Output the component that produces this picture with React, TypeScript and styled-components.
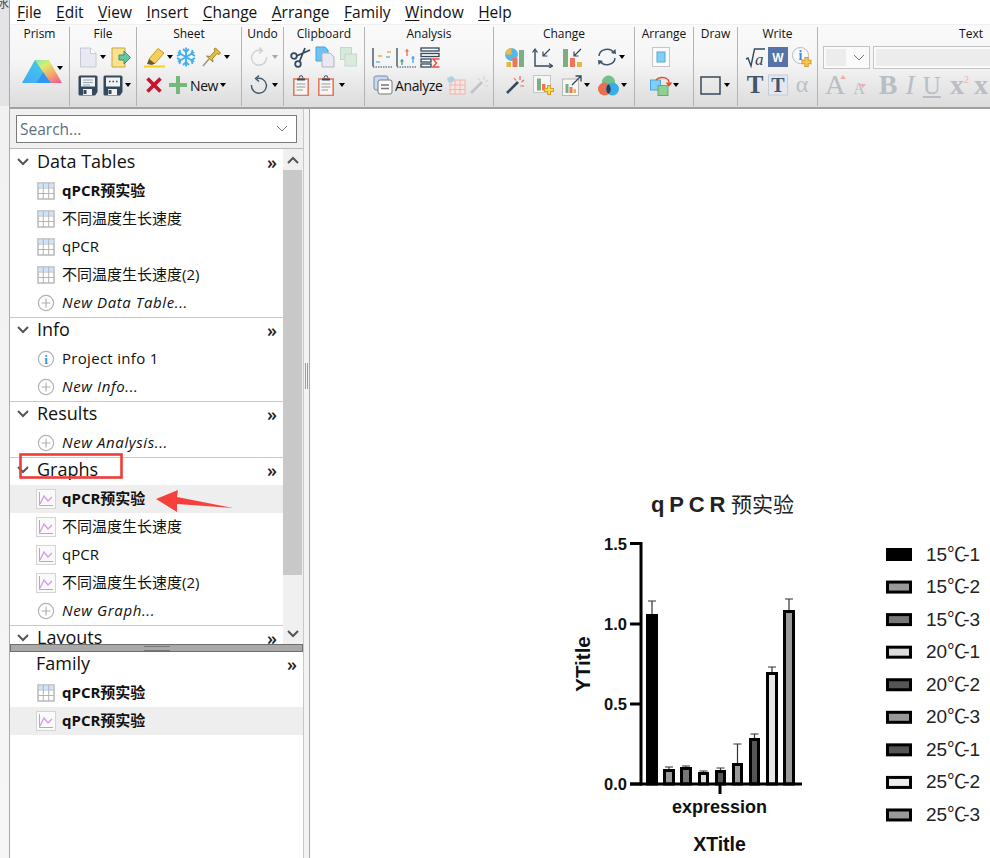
import React from "react";
import styled, { createGlobalStyle } from "styled-components";

const GlobalStyle = createGlobalStyle`
  html, body {
    margin: 0;
    padding: 0;
    background: #ffffff;
  }
  body {
    font-family: "Open Sans", "Noto Sans CJK SC", sans-serif;
    color: #000000;
  }
`;

const Page = styled.div`
  position: relative;
  width: 990px;
  height: 858px;
  overflow: hidden;
  display: flex;
  background: #ffffff;
`;

const LeftStrip = styled.div`
  width: 9px;
  flex: none;
  border-right: 1px solid #a9a9a9;
  background: linear-gradient(to bottom, #e4e4e6 0, #e4e4e6 106px, #f1f1f1 106px, #f6f6f6 100%);
  overflow: hidden;
`;

const StripText = styled.div`
  font-size: 11px;
  line-height: 8px;
  color: #444;
  white-space: nowrap;
  margin-left: -2px;
`;

const Main = styled.div`
  flex: 1;
  min-width: 0;
  display: flex;
  flex-direction: column;
`;

const MenuBar = styled.div`
  height: 24px;
  flex: none;
  display: flex;
  align-items: center;
  gap: 14.5px;
  padding-left: 7px;
  background: #ffffff;
  font-size: 15.5px;
  color: #111;
`;

const MenuItem = styled.span`
  u {
    text-underline-offset: 2px;
  }
`;

const Ribbon = styled.div`
  height: 85px;
  flex: none;
  display: flex;
  box-sizing: border-box;
  border-top: 1px solid #f0f0f0;
  border-bottom: 2px solid #a0a0a0;
  background: linear-gradient(to bottom, #fafafa 0%, #f5f5f5 45%, #dcdcdc 100%);
  overflow: hidden;
`;

const Group = styled.div<{ $w: number; $last?: boolean }>`
  width: ${(p) => p.$w}px;
  flex: none;
  box-sizing: border-box;
  display: flex;
  flex-direction: column;
  margin: 2px 0 1px;
  border-right: ${(p) => (p.$last ? "none" : "1px solid #b4b4b4")};
`;

const GroupTitle = styled.div<{ $right?: boolean }>`
  height: 16px;
  line-height: 14px;
  font-size: 12px;
  text-align: ${(p) => (p.$right ? "right" : "center")};
  padding-right: ${(p) => (p.$right ? "8px" : "0")};
  color: #111;
`;

const ToolRow = styled.div<{ $base?: boolean }>`
  height: 28px;
  display: flex;
  align-items: ${(p) => (p.$base ? "baseline" : "center")};
  flex: none;
`;

const TallRow = styled.div`
  height: 56px;
  display: flex;
  align-items: center;
  flex: none;
`;

const Slot = styled.span<{ $w: number; $ml: number; $h?: number }>`
  width: ${(p) => p.$w}px;
  height: ${(p) => p.$h ?? 22}px;
  margin-left: ${(p) => p.$ml}px;
  flex: none;
  display: inline-flex;
  align-items: center;
  justify-content: center;
  svg {
    display: block;
  }
`;

const LogoSlot = styled(Slot)`
  position: relative;
`;

const Caret = styled.span<{ $ml?: number; $muted?: boolean }>`
  flex: none;
  width: 0;
  height: 0;
  margin-left: ${(p) => p.$ml ?? 3}px;
  border-left: 3.5px solid transparent;
  border-right: 3.5px solid transparent;
  border-top: 4px solid ${(p) => (p.$muted ? "#a8a8a8" : "#000")};
`;

const LogoCaret = styled(Caret)`
  position: absolute;
  right: -1px;
  top: 7px;
  margin: 0;
`;

const ToolLabel = styled.span<{ $ml: number }>`
  font-size: 14px;
  letter-spacing: -0.4px;
  margin-left: ${(p) => p.$ml}px;
  color: #111;
`;

const FontSelect = styled.div`
  width: 47px;
  height: 23px;
  margin-left: 5px;
  box-sizing: border-box;
  flex: none;
  border: 1px solid #c4c4c4;
  background: #fafafa;
  display: flex;
  align-items: center;
  padding: 2px;
  gap: 7px;
`;

const FontSwatch = styled.span`
  width: 20px;
  height: 17px;
  background: #ececec;
`;

const FontInput = styled.div`
  width: 130px;
  height: 23px;
  margin-left: 3px;
  box-sizing: border-box;
  flex: none;
  border: 1px solid #c4c4c4;
  padding: 2px;
  background: #fafafa;
  &::after {
    content: "";
    display: block;
    height: 17px;
    background: #ececec;
  }
`;

const DimGlyph = styled.span<{ $size: number; $ml: number; $bold?: boolean; $italic?: boolean; $under?: boolean }>`
  font-family: "Liberation Serif", serif;
  font-size: ${(p) => p.$size}px;
  font-weight: ${(p) => (p.$bold ? 700 : 400)};
  font-style: ${(p) => (p.$italic ? "italic" : "normal")};
  text-decoration: ${(p) => (p.$under ? "underline" : "none")};
  margin-left: ${(p) => p.$ml}px;
  color: #b9bec4;
  line-height: 28px;
  flex: none;
  position: relative;
`;

const SuperTwo = styled.span`
  font-size: 10px;
  font-weight: 400;
  color: #f0b0aa;
  vertical-align: 11px;
  line-height: 0;
`;

const SizeMark = styled.span<{ $down?: boolean }>`
  position: absolute;
  left: 100%;
  top: ${(p) => (p.$down ? "9px" : "4px")};
  margin-left: -5px;
  width: 0;
  height: 0;
  border-left: 3px solid transparent;
  border-right: 3px solid transparent;
  border-top: ${(p) => (p.$down ? "4px solid #f0b0aa" : "none")};
  border-bottom: ${(p) => (p.$down ? "none" : "4px solid #f0b0aa")};
`;

const Body = styled.div`
  flex: 1;
  min-height: 0;
  display: flex;
`;

const Sidebar = styled.div`
  width: 293px;
  flex: none;
  display: flex;
  flex-direction: column;
`;

const SearchWrap = styled.div`
  height: 40px;
  flex: none;
  box-sizing: border-box;
  padding: 6px 6px 0;
  background: #f0f0f0;
  border-bottom: 1px solid #b8b8b8;
`;

const SearchBox = styled.div`
  height: 28px;
  box-sizing: border-box;
  border: 1px solid #7a7a7a;
  background: #ffffff;
  display: flex;
  align-items: center;
  justify-content: space-between;
  padding: 0 8px 1px 3px;
  font-size: 15.5px;
  color: #5f6f80;
`;

const ListPane = styled.div`
  height: 495px;
  flex: none;
  display: flex;
  overflow: hidden;
  background: #f0f0f0;
`;

const List = styled.div`
  width: 273px;
  flex: none;
  padding-top: 1px;
  background: #ffffff;
`;

const ScrollBar = styled.div`
  width: 19px;
  flex: none;
  background: #f0f0f0;
  display: flex;
  flex-direction: column;
  align-items: stretch;
`;

const ScrollButton = styled.div<{ $h: number }>`
  height: ${(p) => p.$h}px;
  display: flex;
  align-items: center;
  justify-content: center;
  flex: none;
`;

const ScrollThumb = styled.div`
  height: 405px;
  background: #c8c8c8;
  flex: none;
`;

const ScrollTrack = styled.div`
  flex: 1;
`;

const Section = styled.div`
  border-bottom: 1px solid #c8c8c8;
`;

const SectionHeader = styled.div`
  height: 27px;
  box-sizing: border-box;
  display: flex;
  align-items: center;
  padding: 0 6px 3px 6px;
  font-size: 18px;
  color: #111;
  line-height: 24px;
`;

const HeaderLabel = styled.span`
  flex: 1;
  margin-left: 7px;
  margin-top: -2px;
  white-space: nowrap;
`;

const FamilyLabel = styled(HeaderLabel)`
  margin-left: 20px;
`;

const More = styled.span`
  font-size: 18px;
  line-height: 18px;
  font-weight: 600;
  color: #222;
`;

const Row = styled.div<{ $active?: boolean }>`
  height: 28px;
  display: flex;
  align-items: center;
  padding-left: 26px;
  background: ${(p) => (p.$active ? "#eeeeee" : "transparent")};
`;

const RowIcon = styled.span`
  width: 20px;
  flex: none;
  display: flex;
  justify-content: center;
`;

const RowLabel = styled.span<{ $bold?: boolean; $italic?: boolean; $track?: number }>`
  margin-left: 6px;
  padding-bottom: 3px;
  font-size: 15px;
  font-weight: ${(p) => (p.$bold ? 700 : 400)};
  font-style: ${(p) => (p.$italic ? "italic" : "normal")};
  letter-spacing: ${(p) => p.$track ?? 0}px;
  color: #111;
  white-space: nowrap;
`;

const SplitBar = styled.div`
  height: 8px;
  flex: none;
  box-sizing: border-box;
  background: #a9a9a9;
  border: 1px solid #6e6e6e;
  display: flex;
  align-items: center;
  justify-content: center;
  &::after {
    content: "";
    width: 26px;
    height: 3px;
    border-top: 1px solid #777;
    border-bottom: 1px solid #777;
  }
`;

const FamilyPane = styled.div`
  flex: 1;
  background: #ffffff;
`;

const Divider = styled.div`
  width: 7px;
  flex: none;
  box-sizing: border-box;
  background: #f4f4f4;
  border-left: 1px solid #c8c8c8;
  border-right: 1px solid #a9a9a9;
  display: flex;
  align-items: flex-start;
  justify-content: center;
  padding-top: 254px;
  &::after {
    content: "";
    width: 1px;
    height: 26px;
    border-left: 1px solid #9a9a9a;
    border-right: 1px solid #9a9a9a;
  }
`;

const Canvas = styled.div`
  flex: 1;
  background: #ffffff;
  padding: 371px 0 0 260px;
  box-sizing: border-box;
  overflow: hidden;
`;

const ChartSvg = styled.svg`
  display: block;
  width: 420px;
  height: 378px;
  font-family: "Liberation Sans", sans-serif;
`;

const Annotation = styled.svg`
  position: absolute;
  left: 0;
  top: 0;
  width: 990px;
  height: 858px;
  pointer-events: none;
`;

const Ico: React.FC<{ w?: number; h?: number; children: React.ReactNode }> = ({ w = 22, h = 22, children }) => (
  <svg width={w} height={h} viewBox={`0 0 ${w} ${h}`}>
    {children}
  </svg>
);

const SLATE = "#34495e";

const PrismLogo = () => (
  <svg width="40" height="24" viewBox="0 0 40 24">
    <defs>
      <linearGradient id="pl1" x1="0" y1="1" x2="0.7" y2="0">
        <stop offset="0" stopColor="#3fa9f5" />
        <stop offset="1" stopColor="#46c6ee" />
      </linearGradient>
      <linearGradient id="pl2" x1="0" y1="0" x2="1" y2="1">
        <stop offset="0" stopColor="#4ee6d0" />
        <stop offset="0.4" stopColor="#d8ee6e" />
        <stop offset="0.7" stopColor="#f9a26a" />
        <stop offset="1" stopColor="#f04f9a" />
      </linearGradient>
    </defs>
    <polygon points="0,24 13,1 27,1 40,24" fill="url(#pl2)" />
    <polygon points="0,24 13,1 21,13 14,24" fill="url(#pl1)" />
    <polygon points="14,24 21,13 29,24" fill="#2f95f7" />
  </svg>
);

const BlankDoc = () => (
  <Ico w={18} h={21}>
    <path d="M1.5 1 H11.5 L17 6.5 V20 H1.5Z" fill="#e8e9f2" stroke="#c6c8d4" />
    <path d="M11.5 1 V6.5 H17" fill="#fff" stroke="#c6c8d4" />
  </Ico>
);

const ImportDoc = () => (
  <Ico w={20} h={21}>
    <path d="M1 1 H14 V20 H1Z" fill="#fbe38e" stroke="#c9a441" />
    <path d="M8 8 H13 V4 L19.5 10.5 L13 17 V13 H8Z" fill="#67c79d" stroke="#3f8f75" />
  </Ico>
);

const SaveDisk = ({ dots }: { dots?: boolean }) => (
  <Ico w={20} h={21}>
    <path d="M0.5 2 Q0.5 0.5 2 0.5 H18 Q19.5 0.5 19.5 2 V17 L17 20.5 H2 Q0.5 20.5 0.5 19Z" fill={SLATE} />
    <rect x="3" y="2.5" width="14" height="9" fill="#f3f3f3" />
    {dots ? (
      <path d="M6 6.5 h1.5 M9.5 6.5 h1.5 M13 6.5 h1.5" stroke={SLATE} strokeWidth="1.6" />
    ) : (
      <path d="M5 5 H15 M5 7.5 H15 M5 10 H12" stroke="#9aa5b1" />
    )}
    <rect x="5" y="14" width="9" height="6" fill="#f3f3f3" />
    <rect x="5.5" y="15" width="3" height="4" fill={SLATE} />
  </Ico>
);

const Highlighter = () => (
  <Ico w={22} h={22}>
    <path d="M5 13 L14 2.5 L20 7 L11 17.5 L6 17Z" fill="#f5cf5a" stroke="#c9972b" />
    <path d="M5 13 L11 17.5 L8 19 L3 18Z" fill="#6b5a2a" />
    <rect x="0" y="19.5" width="21" height="2" fill="#f6d21f" />
  </Ico>
);

const Snowflake = () => (
  <Ico w={20} h={20}>
    <g stroke="#3fb1ee" strokeWidth="1.8" fill="none">
      <path d="M10 0.5 V19.5 M1.8 5.2 L18.2 14.8 M18.2 5.2 L1.8 14.8" />
      <path d="M7 2 L10 5 L13 2 M7 18 L10 15 L13 18 M1 9 L4.5 7 L3.5 3 M19 9 L15.5 7 L16.5 3 M1 11 L4.5 13 L3.5 17 M19 11 L15.5 13 L16.5 17" />
    </g>
  </Ico>
);

const Pin = () => (
  <Ico w={19} h={20}>
    <path d="M1 19 L7 12" stroke="#a39a7c" strokeWidth="1.6" />
    <path d="M4.5 9 L8 9.5 L13 4 L12 2 L13.5 1 L18.5 6 L17 7.5 L15 6.5 L10.5 11.5 L11 15Z" fill="#e7bd3a" stroke="#a3801f" />
  </Ico>
);

const RedX = () => (
  <Ico w={18} h={18}>
    <path d="M2.5 2.5 L15.5 15.5 M15.5 2.5 L2.5 15.5" stroke="#c8142e" strokeWidth="3.6" />
  </Ico>
);

const GreenPlus = () => (
  <Ico w={20} h={20}>
    <path d="M10 1 V19 M1 10 H19" stroke="#74b87a" strokeWidth="4" />
  </Ico>
);

const Circular = ({ muted, flip }: { muted?: boolean; flip?: boolean }) => (
  <Ico w={18} h={20}>
    <g transform={flip ? "translate(18 0) scale(-1 1)" : undefined} fill="none" stroke={muted ? "#cbd0d5" : "#3f566b"} strokeWidth="1.4">
      <path d="M11 3.5 A7.5 7.5 0 1 0 16.5 10" />
      <path d="M9 0.5 L12.5 3.5 L9 6.5" />
    </g>
  </Ico>
);

const Scissors = () => (
  <Ico w={21} h={22}>
    <g fill="none" stroke={SLATE} strokeWidth="1.8">
      <circle cx="4" cy="10" r="2.8" />
      <circle cx="8" cy="18" r="2.8" />
      <path d="M6.5 10 L20 4 M9.5 15.5 L15 2" />
    </g>
  </Ico>
);

const CopyDocs = () => (
  <Ico w={21} h={22}>
    <path d="M1 1 H10 L13 4 V15 H1Z" fill="#6cc3f3" stroke="#4aa3de" />
    <path d="M7 7 H15 L19 11 V21 H7Z" fill="#e8e9f2" stroke="#aeb2c0" />
  </Ico>
);

const PasteDim = () => (
  <Ico w={17} h={20}>
    <rect x="0.5" y="0.5" width="11" height="12" fill="#d9e8dc" stroke="#c4d8c8" />
    <rect x="5" y="7" width="11.5" height="12" fill="#d8ebdc" stroke="#c4d8c8" />
  </Ico>
);

const Clipboard = () => (
  <Ico w={16} h={21}>
    <circle cx="8" cy="2.5" r="1.8" fill="none" stroke={SLATE} />
    <rect x="0.8" y="4" width="14.4" height="16.5" fill="#f6f6f6" stroke="#e5775a" strokeWidth="1.6" />
    <rect x="4" y="3.5" width="8" height="2" fill={SLATE} />
    <path d="M3.5 9 H12.5 M3.5 12 H12.5 M3.5 15 H10" stroke="#999" />
  </Ico>
);

const SolidDash = ({ color, y, x = 5 }: { color: string; y: number; x?: number }) => (
  <path d={`M${x} ${y} h4`} stroke={color} strokeWidth="1.4" />
);

const ColumnStats = () => (
  <Ico w={21} h={21}>
    <path d="M1 1 V19.5" stroke={SLATE} strokeWidth="1.3" />
    <path d="M1 20 H21" stroke={SLATE} strokeDasharray="1.5 1" />
    <SolidDash color="#f0a63a" y={5} x={15} />
    <SolidDash color="#f0a63a" y={9} x={6} />
    <SolidDash color="#5fb9e0" y={10} x={14} />
    <SolidDash color="#5fb9e0" y={15} x={4} />
  </Ico>
);

const TTest = () => (
  <Ico w={21} h={21}>
    <path d="M1 1 V19.5" stroke={SLATE} strokeWidth="1.3" />
    <path d="M1 20 H21" stroke={SLATE} strokeDasharray="1.5 1" />
    <path d="M6 12 v6 M4.5 14 h3" stroke="#3f9e85" strokeWidth="1.3" />
    <path d="M11 2 v7 M9.5 4 h3" stroke="#ef6a4d" strokeWidth="1.3" />
    <path d="M17 9 v7 M15.5 11 h3" stroke="#4aa3de" strokeWidth="1.3" />
  </Ico>
);

const Sigma = () => (
  <Ico w={20} h={21}>
    <g fill="#fff" stroke={SLATE} strokeWidth="1.3">
      <rect x="1" y="1" width="18" height="3" />
      <rect x="1" y="6.5" width="18" height="3" />
      <rect x="1" y="12" width="10" height="3" />
      <rect x="1" y="17" width="10" height="3" />
    </g>
    <path d="M19.5 12 H13 L16.5 16 L13 20 H19.5" fill="none" stroke="#ef4f3f" strokeWidth="1.5" />
  </Ico>
);

const AnalyzeIcon = () => (
  <Ico w={20} h={20}>
    <rect x="1" y="1" width="14" height="14" rx="2" fill="#c7d9f5" stroke="#7e8da6" />
    <rect x="5" y="5" width="14" height="14" rx="2" fill="#fbfbfb" stroke="#7a7a7a" />
    <path d="M8 10 H16 M8 13.5 H16" stroke="#777" strokeWidth="1.6" />
  </Ico>
);

const DimGrid = () => (
  <Ico w={20} h={20}>
    <rect x="4" y="5" width="15" height="14" fill="#f8e4e0" stroke="#eab8ae" />
    <path d="M9 5 V19 M14 5 V19 M4 10 H19 M4 14.5 H19" stroke="#eab8ae" />
    <path d="M1 3 L6 1 L9 4 L6 8 L2 7Z" fill="#a9d4e8" />
  </Ico>
);

const Wand = ({ muted }: { muted?: boolean }) => (
  <Ico w={20} h={20}>
    <path d="M2 18 L13 7" stroke={muted ? "#c0c4c8" : SLATE} strokeWidth="2.6" />
    <path d="M15 1 V5 M19 5 L16.5 7 M19 11 H15.5 M9 3 L11 5.5" stroke={muted ? "#efc9c0" : "#ef6a4d"} strokeWidth="1.2" />
  </Ico>
);

const PieBars = () => (
  <Ico w={21} h={21}>
    <circle cx="7.5" cy="7.5" r="6.5" fill="#55b8e8" />
    <path d="M7.5 7.5 V1 A6.5 6.5 0 0 0 1 7.5Z" fill="#f2b83f" />
    <rect x="15" y="3" width="5" height="17" fill="#7cae84" />
    <rect x="8.5" y="11" width="5" height="9" fill="#ee7558" />
    <rect x="2.5" y="15" width="4.5" height="5" fill="#e6b73d" />
  </Ico>
);

const AxisSwap = () => (
  <Ico w={21} h={21}>
    <path d="M3 3 V19 H20" fill="none" stroke={SLATE} strokeWidth="1.4" />
    <path d="M0.5 5.5 L3 2 L5.5 5.5 M17 16.5 L20.5 19 L17 21" fill="none" stroke={SLATE} strokeWidth="1.2" />
    <path d="M18 2 L11 9 M11 4.5 V9 H15.5" fill="none" stroke={SLATE} strokeWidth="1.2" />
  </Ico>
);

const BarsShrink = () => (
  <Ico w={21} h={21}>
    <rect x="1" y="2" width="5" height="18" fill="#7cae84" />
    <rect x="8" y="11" width="5" height="9" fill="#ee7558" />
    <rect x="15" y="15" width="5" height="5" fill="#e6b73d" />
    <path d="M19 2 L12 9 M12 4.5 V9 H16.5" fill="none" stroke={SLATE} strokeWidth="1.2" />
  </Ico>
);

const CycleArrows = () => (
  <Ico w={20} h={20}>
    <g fill="none" stroke="#3f566b" strokeWidth="1.5">
      <path d="M2 9 A8 7 0 0 1 17 6" />
      <path d="M18 11 A8 7 0 0 1 3 14" />
    </g>
    <path d="M14 6 L19 7 L18.5 2Z M1.5 18 L1 13 L6 14Z" fill="#3f566b" />
  </Ico>
);

const ChartPlus = () => (
  <Ico w={21} h={21}>
    <rect x="0.5" y="0.5" width="17" height="17" fill="#f6f6f6" stroke="#c6c6c6" />
    <rect x="4" y="3.5" width="4" height="12" fill="#7cae84" />
    <rect x="9" y="9" width="3.5" height="6.5" fill="#ee7558" />
    <path d="M16 10 V20 M11 15 H21" stroke="#dd9d23" strokeWidth="4" />
    <path d="M16 11 V19 M12 15 H20" stroke="#f9d94e" strokeWidth="2" />
  </Ico>
);

const ChartExpand = () => (
  <Ico w={20} h={21}>
    <rect x="0.5" y="4" width="16" height="16.5" fill="#f6f6f6" stroke="#b8b8b8" />
    <rect x="3.5" y="9" width="3" height="9" fill="#7cae84" />
    <rect x="7.5" y="12" width="3" height="6" fill="#ee7558" />
    <rect x="11.5" y="14" width="2.5" height="4" fill="#e6b73d" />
    <path d="M10 10 L19 1 M13.5 1 H19 V6.5" fill="none" stroke={SLATE} strokeWidth="1.3" />
  </Ico>
);

const Venn = () => (
  <Ico w={21} h={21}>
    <circle cx="10.5" cy="7" r="6.5" fill="#74c08a" />
    <circle cx="6.5" cy="14" r="6.5" fill="#ee6d50" />
    <circle cx="14.5" cy="14" r="6.5" fill="#38aee8" />
    <path d="M10.5 9 A6.5 6.5 0 0 1 10.5 19 A6.5 6.5 0 0 1 10.5 9Z" fill="#2c3e50" />
  </Ico>
);

const ArrangeFront = () => (
  <Ico w={18} h={20}>
    <rect x="0.5" y="0.5" width="17" height="19" fill="#fbfbfb" stroke="#c6c6c6" />
    <rect x="5" y="5" width="8" height="10" fill="#7fd0f7" stroke="#5ba7d4" />
  </Ico>
);

const ArrangeBack = () => (
  <Ico w={24} h={21}>
    <rect x="0.5" y="5" width="10" height="10" fill="#7fd0f7" stroke="#4aa3de" />
    <rect x="8" y="10.5" width="10" height="10" fill="#90ce92" stroke="#6ba670" />
    <path d="M6 5 A7 5 0 0 1 19 7 L19 10 M16.5 7.5 L19 10.5 L21.5 7.5" fill="none" stroke="#e5482d" strokeWidth="1.4" />
  </Ico>
);

const ShapeRect = () => (
  <Ico w={21} h={19}>
    <rect x="1" y="1" width="19" height="17" fill="none" stroke={SLATE} strokeWidth="1.5" />
  </Ico>
);

const RootSign = () => (
  <Ico w={21} h={24}>
    <path d="M1 14 L3 13 L6 21 L9.5 4 H20" fill="none" stroke={SLATE} strokeWidth="1.4" />
    <text x="10" y="20" fontFamily="Liberation Serif" fontStyle="italic" fontSize="17" fill={SLATE}>a</text>
  </Ico>
);

const WordBadge = () => (
  <Ico w={20} h={20}>
    <rect x="0" y="0" width="20" height="20" fill="#5673a8" />
    <text x="10" y="15" textAnchor="middle" fontFamily="Liberation Sans" fontWeight="700" fontSize="12" fill="#fff">W</text>
  </Ico>
);

const InfoPlus = () => (
  <Ico w={20} h={21}>
    <circle cx="8.5" cy="8.5" r="8" fill="#fbfbfb" stroke="#b8b8b8" />
    <text x="8.5" y="13" textAnchor="middle" fontFamily="Liberation Serif" fontWeight="700" fontSize="14" fill="#3f8fe0">i</text>
    <path d="M14.5 10 V20 M9.5 15 H19.5" stroke="#d79a2b" strokeWidth="4.4" />
    <path d="M14.5 11 V19 M10.5 15 H18.5" stroke="#f5c851" strokeWidth="2.4" />
  </Ico>
);

const SerifT = ({ boxed }: { boxed?: boolean }) => (
  <Ico w={20} h={26}>
    {boxed && <rect x="0.5" y="3" width="19" height="20" fill="#e4e7f0" stroke="#c8ccd6" />}
    <text x="10" y={boxed ? 20 : 21} textAnchor="middle" fontFamily="Liberation Serif" fontWeight="700" fontSize={boxed ? 20 : 25} fill="#3f566b">T</text>
  </Ico>
);

const Alpha = () => (
  <Ico w={18} h={26}>
    <text x="9" y="20" textAnchor="middle" fontFamily="Liberation Serif" fontSize="24" fill="#bcc1c6">α</text>
  </Ico>
);

const TableIcon = () => (
  <Ico w={18} h={18}>
    <rect x="1" y="1" width="16" height="16" fill="#fff" stroke="#b4b4b4" strokeWidth="1.4" />
    <rect x="1.7" y="1.7" width="14.6" height="3.4" fill="#cfe3f8" />
    <path d="M6.3 1 V17 M11.7 1 V17 M1 6 H17 M1 11.5 H17" stroke="#b4b4b4" />
  </Ico>
);

const GraphIcon = () => (
  <Ico w={20} h={20}>
    <rect x="0.5" y="0.5" width="19" height="19" fill="#fafafa" stroke="#d4d4d4" />
    <path d="M3.5 3 V16.5 H17" fill="none" stroke="#aab0b8" />
    <path d="M4 15 L8 7 L12 12 L16 8" fill="none" stroke="#d69be8" strokeWidth="1.4" />
  </Ico>
);

const PlusIcon = () => (
  <Ico w={18} h={18}>
    <circle cx="9" cy="9" r="7.6" fill="none" stroke="#b0b0b0" strokeWidth="1.2" />
    <path d="M9 4.5 V13.5 M4.5 9 H13.5" stroke="#b0b0b0" strokeWidth="1.2" />
  </Ico>
);

const InfoIcon = () => (
  <Ico w={18} h={18}>
    <circle cx="9" cy="9" r="7.6" fill="#fff" stroke="#b0b0b0" strokeWidth="1.2" />
    <text x="9" y="13.5" textAnchor="middle" fontFamily="Liberation Serif" fontWeight="700" fontSize="13" fill="#3f8fe0">i</text>
  </Ico>
);

const Chevron = ({ up, color = "#555", sw = 2 }: { up?: boolean; color?: string; sw?: number }) => (
  <svg width="14" height="8" viewBox="0 0 14 8">
    <path d={up ? "M2 7 L7 2 L12 7" : "M2 1 L7 6 L12 1"} fill="none" stroke={color} strokeWidth={sw} />
  </svg>
);

const ThinChevron = () => (
  <svg width="12" height="7" viewBox="0 0 12 7">
    <path d="M1 1 L6 6 L11 1" fill="none" stroke="#777" strokeWidth="1" />
  </svg>
);

interface SidebarItem {
  icon: "table" | "graph" | "plus" | "info";
  label: string;
  bold?: boolean;
  italic?: boolean;
  active?: boolean;
  track?: number;
}

const itemIcon = (kind: SidebarItem["icon"]) => {
  if (kind === "table") return <TableIcon />;
  if (kind === "graph") return <GraphIcon />;
  if (kind === "info") return <InfoIcon />;
  return <PlusIcon />;
};

const sections: { title: string; items: SidebarItem[] }[] = [
  {
    title: "Data Tables",
    items: [
      { icon: "table", label: "qPCR预实验", bold: true },
      { icon: "table", label: "不同温度生长速度" },
      { icon: "table", label: "qPCR" },
      { icon: "table", label: "不同温度生长速度(2)" },
      { icon: "plus", label: "New Data Table...", italic: true, track: 0.6 },
    ],
  },
  {
    title: "Info",
    items: [
      { icon: "info", label: "Project info 1", track: 0.3 },
      { icon: "plus", label: "New Info...", italic: true, track: 0.6 },
    ],
  },
  {
    title: "Results",
    items: [{ icon: "plus", label: "New Analysis...", italic: true, track: 0.6 }],
  },
  {
    title: "Graphs",
    items: [
      { icon: "graph", label: "qPCR预实验", bold: true, active: true },
      { icon: "graph", label: "不同温度生长速度" },
      { icon: "graph", label: "qPCR" },
      { icon: "graph", label: "不同温度生长速度(2)" },
      { icon: "plus", label: "New Graph...", italic: true, track: 0.6 },
    ],
  },
];

const SidebarRow: React.FC<{ item: SidebarItem }> = ({ item }) => (
  <Row $active={item.active}>
    <RowIcon>{itemIcon(item.icon)}</RowIcon>
    <RowLabel $bold={item.bold} $italic={item.italic} $track={item.track}>
      {item.label}
    </RowLabel>
  </Row>
);

const menus = ["File", "Edit", "View", "Insert", "Change", "Arrange", "Family", "Window", "Help"];

// x and w are the outer edges of each bar, stroke included
const bars = [
  { x: 646, w: 12, top: 614, err: 601, fill: "#000" },
  { x: 663, w: 12, top: 769, err: 767, fill: "#999" },
  { x: 680, w: 12, top: 767, err: 766, fill: "#777" },
  { x: 698, w: 11, top: 772, err: 771, fill: "#ddd" },
  { x: 715, w: 11, top: 770, err: 768, fill: "#555" },
  { x: 732, w: 11, top: 763, err: 744, fill: "#999" },
  { x: 749, w: 11, top: 738, err: 734, fill: "#555" },
  { x: 766, w: 12, top: 672, err: 667, fill: "#e6e6e6" },
  { x: 783, w: 12, top: 610, err: 599, fill: "#999" },
];

const legend = [
  { temp: "15", rep: "-1", fill: "#000" },
  { temp: "15", rep: "-2", fill: "#999" },
  { temp: "15", rep: "-3", fill: "#777" },
  { temp: "20", rep: "-1", fill: "#ddd" },
  { temp: "20", rep: "-2", fill: "#555" },
  { temp: "20", rep: "-3", fill: "#999" },
  { temp: "25", rep: "-1", fill: "#555" },
  { temp: "25", rep: "-2", fill: "#eee" },
  { temp: "25", rep: "-3", fill: "#999" },
];

const yTicks = [
  { label: "1.5", y: 543.5 },
  { label: "1.0", y: 624 },
  { label: "0.5", y: 704 },
  { label: "0.0", y: 784 },
];

const Chart = () => (
  <ChartSvg viewBox="570 480 420 378">
    <text x="651" y="512" fontSize="22" fontWeight="700" letterSpacing="4.8" fill="#222">qPCR</text>
    <text x="731" y="512" fontSize="21" fill="#222" fontFamily='"Noto Sans CJK SC", sans-serif'>预实验</text>
    {bars.map((b) => (
      <g key={b.x}>
        <path
          d={`M${b.x + b.w / 2} ${b.top} V${b.err} M${b.x + b.w / 2 - 4} ${b.err} h8`}
          stroke="#333"
          strokeWidth="1.2"
          fill="none"
        />
        <rect x={b.x + 1.5} y={b.top + 1.5} width={b.w - 3} height={784 - b.top - 1.5} fill={b.fill} stroke="#000" strokeWidth="3" />
      </g>
    ))}
    <path d="M641 542 V785.5" stroke="#000" strokeWidth="3" />
    <path d="M630 784 H802 M720 784 V794" stroke="#000" strokeWidth="3" fill="none" />
    {yTicks.map((t) => (
      <g key={t.label}>
        <path d={`M630 ${t.y} H641`} stroke="#000" strokeWidth="3" />
        <text x="627" y={t.y + 6} textAnchor="end" fontSize="16.5" fontWeight="700" fill="#111">
          {t.label}
        </text>
      </g>
    ))}
    <text transform="translate(590 664) rotate(-90)" textAnchor="middle" fontSize="20.5" fontWeight="700" fill="#111">
      YTitle
    </text>
    <text x="719.5" y="813" textAnchor="middle" fontSize="18" fontWeight="700" fill="#111">expression</text>
    <text x="719.5" y="851" textAnchor="middle" fontSize="19.5" fontWeight="700" fill="#111">XTitle</text>
    {legend.map((l, i) => {
      const cy = 554.5 + i * 32.56;
      return (
        <g key={l.temp + l.rep}>
          <rect x="887.5" y={cy - 5} width="23" height="10" fill={l.fill} stroke="#000" strokeWidth="3" />
          <text x="926" y={cy + 6} fontSize="19" fill="#222">
            {l.temp}
            <tspan fontFamily='"Noto Sans CJK SC", sans-serif'>℃</tspan>
            <tspan dx="-3">{l.rep}</tspan>
          </text>
        </g>
      );
    })}
  </ChartSvg>
);

export default function App() {
  return (
    <Page>
      <GlobalStyle />
      <LeftStrip>
        <StripText>水</StripText>
      </LeftStrip>
      <Main>
        <MenuBar>
          {menus.map((m) => (
            <MenuItem key={m}>
              <u>{m[0]}</u>
              {m.slice(1)}
            </MenuItem>
          ))}
        </MenuBar>
        <Ribbon>
          <Group $w={60}>
            <GroupTitle>Prism</GroupTitle>
            <TallRow>
              <LogoSlot $w={40} $ml={12} $h={24}>
                <PrismLogo />
                <LogoCaret />
              </LogoSlot>
            </TallRow>
          </Group>
          <Group $w={67}>
            <GroupTitle>File</GroupTitle>
            <ToolRow>
              <Slot $w={18} $ml={9}>
                <BlankDoc />
              </Slot>
              <Caret />
              <Slot $w={20} $ml={5}>
                <ImportDoc />
              </Slot>
            </ToolRow>
            <ToolRow>
              <Slot $w={20} $ml={8}>
                <SaveDisk />
              </Slot>
              <Slot $w={20} $ml={5}>
                <SaveDisk dots />
              </Slot>
              <Caret $ml={2} />
            </ToolRow>
          </Group>
          <Group $w={105}>
            <GroupTitle>Sheet</GroupTitle>
            <ToolRow>
              <Slot $w={22} $ml={7}>
                <Highlighter />
              </Slot>
              <Caret $ml={1} />
              <Slot $w={20} $ml={3}>
                <Snowflake />
              </Slot>
              <Slot $w={19} $ml={6}>
                <Pin />
              </Slot>
              <Caret />
            </ToolRow>
            <ToolRow>
              <Slot $w={18} $ml={8}>
                <RedX />
              </Slot>
              <Slot $w={20} $ml={5}>
                <GreenPlus />
              </Slot>
              <ToolLabel $ml={2}>New</ToolLabel>
              <Caret $ml={2} />
            </ToolRow>
          </Group>
          <Group $w={42}>
            <GroupTitle>Undo</GroupTitle>
            <ToolRow>
              <Slot $w={18} $ml={8}>
                <Circular muted />
              </Slot>
              <Caret $ml={4} $muted />
            </ToolRow>
            <ToolRow>
              <Slot $w={18} $ml={8}>
                <Circular flip />
              </Slot>
              <Caret $ml={4} />
            </ToolRow>
          </Group>
          <Group $w={81}>
            <GroupTitle>Clipboard</GroupTitle>
            <ToolRow>
              <Slot $w={21} $ml={6}>
                <Scissors />
              </Slot>
              <Slot $w={21} $ml={4}>
                <CopyDocs />
              </Slot>
              <Slot $w={17} $ml={4}>
                <PasteDim />
              </Slot>
            </ToolRow>
            <ToolRow>
              <Slot $w={16} $ml={9}>
                <Clipboard />
              </Slot>
              <Slot $w={16} $ml={9}>
                <Clipboard />
              </Slot>
              <Caret $ml={5} />
            </ToolRow>
          </Group>
          <Group $w={129}>
            <GroupTitle>Analysis</GroupTitle>
            <ToolRow>
              <Slot $w={21} $ml={7}>
                <ColumnStats />
              </Slot>
              <Slot $w={21} $ml={3}>
                <TTest />
              </Slot>
              <Slot $w={20} $ml={3}>
                <Sigma />
              </Slot>
            </ToolRow>
            <ToolRow>
              <Slot $w={20} $ml={8}>
                <AnalyzeIcon />
              </Slot>
              <ToolLabel $ml={2}>Analyze</ToolLabel>
              <Slot $w={20} $ml={4}>
                <DimGrid />
              </Slot>
              <Slot $w={20} $ml={3}>
                <Wand muted />
              </Slot>
            </ToolRow>
          </Group>
          <Group $w={141}>
            <GroupTitle>Change</GroupTitle>
            <ToolRow>
              <Slot $w={21} $ml={10}>
                <PieBars />
              </Slot>
              <Slot $w={21} $ml={7}>
                <AxisSwap />
              </Slot>
              <Slot $w={21} $ml={9}>
                <BarsShrink />
              </Slot>
              <Slot $w={20} $ml={14}>
                <CycleArrows />
              </Slot>
              <Caret $ml={2} />
            </ToolRow>
            <ToolRow>
              <Slot $w={20} $ml={11}>
                <Wand />
              </Slot>
              <Slot $w={21} $ml={8}>
                <ChartPlus />
              </Slot>
              <Slot $w={20} $ml={8}>
                <ChartExpand />
              </Slot>
              <Caret $ml={2} />
              <Slot $w={21} $ml={8}>
                <Venn />
              </Slot>
              <Caret $ml={2} />
            </ToolRow>
          </Group>
          <Group $w={59}>
            <GroupTitle>Arrange</GroupTitle>
            <ToolRow>
              <Slot $w={18} $ml={17}>
                <ArrangeFront />
              </Slot>
            </ToolRow>
            <ToolRow>
              <Slot $w={24} $ml={15}>
                <ArrangeBack />
              </Slot>
              <Caret $ml={-1} />
            </ToolRow>
          </Group>
          <Group $w={44}>
            <GroupTitle>Draw</GroupTitle>
            <ToolRow />
            <ToolRow>
              <Slot $w={21} $ml={6}>
                <ShapeRect />
              </Slot>
              <Caret $ml={3} />
            </ToolRow>
          </Group>
          <Group $w={80}>
            <GroupTitle>Write</GroupTitle>
            <ToolRow>
              <Slot $w={21} $ml={7} $h={24}>
                <RootSign />
              </Slot>
              <Slot $w={20} $ml={2}>
                <WordBadge />
              </Slot>
              <Slot $w={20} $ml={4}>
                <InfoPlus />
              </Slot>
            </ToolRow>
            <ToolRow>
              <Slot $w={20} $ml={7} $h={26}>
                <SerifT />
              </Slot>
              <Slot $w={20} $ml={3} $h={26}>
                <SerifT boxed />
              </Slot>
              <Slot $w={18} $ml={5} $h={26}>
                <Alpha />
              </Slot>
            </ToolRow>
          </Group>
          <Group $w={173} $last>
            <GroupTitle $right>Text</GroupTitle>
            <ToolRow>
              <FontSelect>
                <FontSwatch />
                <ThinChevron />
              </FontSelect>
              <FontInput />
            </ToolRow>
            <ToolRow $base>
              <DimGlyph $size={28} $ml={7}>
                A
                <SizeMark />
              </DimGlyph>
              <DimGlyph $size={16} $ml={8}>
                A
                <SizeMark $down />
              </DimGlyph>
              <DimGlyph $size={28} $ml={14} $bold>
                B
              </DimGlyph>
              <DimGlyph $size={28} $ml={8} $italic>
                I
              </DimGlyph>
              <DimGlyph $size={25} $ml={8} $under>
                U
              </DimGlyph>
              <DimGlyph $size={28} $ml={9} $bold>
                x<SuperTwo>2</SuperTwo>
              </DimGlyph>
              <DimGlyph $size={28} $ml={5} $bold>
                x
              </DimGlyph>
            </ToolRow>
          </Group>
        </Ribbon>
        <Body>
          <Sidebar>
            <SearchWrap>
              <SearchBox>
                Search...
                <ThinChevron />
              </SearchBox>
            </SearchWrap>
            <ListPane>
              <List>
                {sections.map((s) => (
                  <Section key={s.title}>
                    <SectionHeader>
                      <Chevron />
                      <HeaderLabel>{s.title}</HeaderLabel>
                      <More>»</More>
                    </SectionHeader>
                    {s.items.map((item) => (
                      <SidebarRow key={item.label} item={item} />
                    ))}
                  </Section>
                ))}
                <SectionHeader>
                  <Chevron />
                  <HeaderLabel>Layouts</HeaderLabel>
                  <More>»</More>
                </SectionHeader>
              </List>
              <ScrollBar>
                <ScrollButton $h={21}>
                  <Chevron up />
                </ScrollButton>
                <ScrollThumb />
                <ScrollTrack />
                <ScrollButton $h={20}>
                  <Chevron />
                </ScrollButton>
              </ScrollBar>
            </ListPane>
            <SplitBar />
            <FamilyPane>
              <SectionHeader>
                <FamilyLabel>Family</FamilyLabel>
                <More>»</More>
              </SectionHeader>
              <Row>
                <RowIcon>
                  <TableIcon />
                </RowIcon>
                <RowLabel $bold>qPCR预实验</RowLabel>
              </Row>
              <Row $active>
                <RowIcon>
                  <GraphIcon />
                </RowIcon>
                <RowLabel $bold>qPCR预实验</RowLabel>
              </Row>
            </FamilyPane>
          </Sidebar>
          <Divider />
          <Canvas>
            <Chart />
          </Canvas>
        </Body>
      </Main>
      <Annotation viewBox="0 0 990 858">
        <rect x="20.5" y="454.5" width="101" height="23" fill="none" stroke="#ef3b36" strokeWidth="2.6" />
        <polygon points="156,499 178,490 177,497 233,508 177,504 177,512" fill="#f6403c" />
      </Annotation>
    </Page>
  );
}
